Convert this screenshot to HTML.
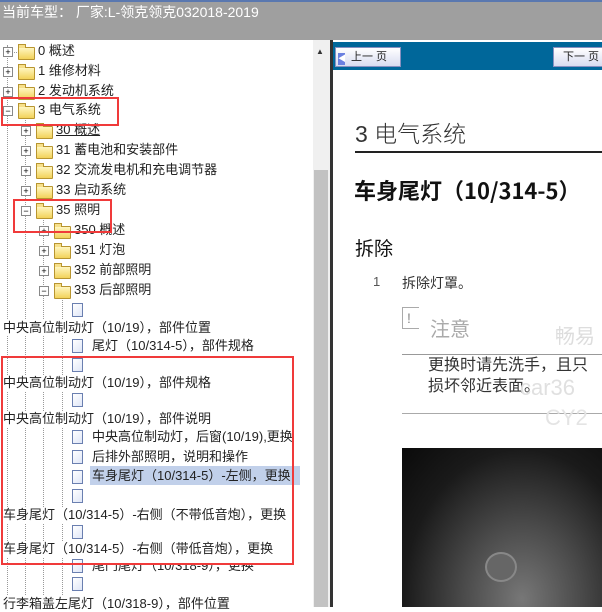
<!DOCTYPE html><html><head><meta charset="utf-8"><style>
body{margin:0;width:602px;height:607px;overflow:hidden;position:relative;font-family:"Liberation Sans","Noto Sans CJK SC",sans-serif;background:#fff}
.a{position:absolute;white-space:nowrap}
.t{font-size:13px;color:#222;line-height:16px}
.fo{position:absolute;width:15px;height:11px;background:linear-gradient(#fff6c0,#f2d25a);border:1px solid #b89530;border-radius:1px}
.fo:before{content:"";position:absolute;left:-1px;top:-4px;width:6px;height:3px;background:#f7e08a;border:1px solid #b89530;border-bottom:none}
.ex{position:absolute;width:8px;height:8px;border:1px solid #888;background:#fff;font-size:9px;line-height:8px;text-align:center;color:#000}
.doc{position:absolute;width:9px;height:12px;border:1px solid #6a7fb0;background:linear-gradient(135deg,#fff,#dfe6f7)}
.vl{position:absolute;width:0;border-left:1px dotted #999}
.hl{position:absolute;height:0;border-top:1px dotted #999}
.rb{position:absolute;border:2px solid #f03a3a}
</style></head><body>
<div class="a" style="left:0;top:0;width:602px;height:40px;background:#9f9f9f"></div>
<div class="a" style="left:0;top:0;width:602px;height:2px;background:#5a78b0"></div>
<div class="a" style="left:2px;top:2px;font-size:14px;color:#fff;">当前车型： 厂家:L-领克领克032018-2019</div>
<div class="vl" style="left:7px;top:45px;height:562px"></div>
<div class="vl" style="left:25px;top:120px;height:487px"></div>
<div class="vl" style="left:43px;top:220px;height:387px"></div>
<div class="vl" style="left:62px;top:300px;height:307px"></div>
<div class="a" style="left:313px;top:40px;width:17px;height:567px;background:#f0f0f0"></div>
<div class="a" style="left:314px;top:170px;width:14px;height:437px;background:#c2c2c2"></div>
<div class="a" style="left:316px;top:47px;font-size:8px;color:#333">▲</div>
<div class="a" style="left:330px;top:40px;width:3px;height:567px;background:#333"></div>
<div class="a" style="left:333px;top:42px;width:269px;height:28px;background:#00679a"></div>
<div class="a" style="left:335px;top:47px;width:64px;height:18px;background:linear-gradient(#fff,#d8dcf0);border:1px solid #8890c0;font-size:11px;line-height:18px;color:#222"><span style="display:inline-block;width:7px;height:12px;background:#6b80e0;color:#fff;font-size:8px;line-height:12px;margin:0 6px 0 2px;vertical-align:-1px">◀</span>上一 页</div>
<div class="a" style="left:553px;top:47px;width:60px;height:18px;background:linear-gradient(#fff,#d8dcf0);border:1px solid #8890c0;font-size:11px;line-height:18px;color:#222;padding-left:9px">下一 页</div>
<div class="a" style="left:355px;top:115px;font-size:23px;color:#333;font-weight:300">3 电气系统</div>
<div class="a" style="left:355px;top:151px;width:247px;height:2px;background:#222"></div>
<div class="a" style="left:354px;top:174px;font-size:22px;font-weight:bold;color:#111;font-family:'Noto Sans CJK SC',sans-serif">车身尾灯（10/314-5）</div>
<div class="a" style="left:355px;top:234px;font-size:19px;color:#111">拆除</div>
<div class="a" style="left:373px;top:274px;font-size:13px;color:#555">1</div>
<div class="a" style="left:402px;top:273px;font-size:14px;color:#333">拆除灯罩。</div>
<div class="a" style="left:402px;top:307px;width:12px;height:20px;border:1px solid #aaa;border-right:none;font-size:14px;color:#888;line-height:20px;padding-left:4px">!</div>
<div class="a" style="left:430px;top:313px;font-size:20px;color:#aaa">注意</div>
<div class="a" style="left:402px;top:354px;width:200px;height:1px;background:#999"></div>
<div class="a" style="left:428px;top:355px;font-size:16px;line-height:21px;color:#333">更换时请先洗手，且只<br>损坏邻近表面。</div>
<div class="a" style="left:402px;top:413px;width:200px;height:1px;background:#aaa"></div>
<div class="a" style="left:555px;top:320px;font-size:20px;color:#ddd">畅易</div>
<div class="a" style="left:520px;top:375px;font-size:22px;color:#e0e0e0">car36</div>
<div class="a" style="left:545px;top:405px;font-size:22px;color:#e4e4e4">CY2</div>
<div class="a" style="left:402px;top:448px;width:200px;height:159px;background:radial-gradient(ellipse at 60% 95%,#777 0%,#4a4a4a 35%,#1a1a1a 70%,#0a0a0a 100%)"></div>
<div class="a" style="left:485px;top:552px;width:28px;height:26px;border-radius:50%;background:#666;border:2px solid #888"></div>

<div class="hl" style="left:8px;top:52px;width:9px"></div><div class="ex" style="left:3px;top:47px">+</div><div class="fo" style="left:18px;top:47px"></div><div class="a t" style="left:38px;top:43px">0 概述</div>
<div class="ex" style="left:3px;top:67px">+</div><div class="fo" style="left:18px;top:67px"></div><div class="a t" style="left:38px;top:63px">1 维修材料</div>
<div class="ex" style="left:3px;top:87px">+</div><div class="fo" style="left:18px;top:87px"></div><div class="a t" style="left:38px;top:83px">2 发动机系统</div>
<div class="ex" style="left:3px;top:106px">−</div><div class="fo" style="left:18px;top:106px"></div><div class="a t" style="left:38px;top:102px">3 电气系统</div>
<div class="ex" style="left:21px;top:126px">+</div><div class="fo" style="left:36px;top:126px"></div><div class="a t" style="left:56px;top:122px;text-decoration:underline">30 概述</div>
<div class="ex" style="left:21px;top:146px">+</div><div class="fo" style="left:36px;top:146px"></div><div class="a t" style="left:56px;top:142px">31 蓄电池和安装部件</div>
<div class="ex" style="left:21px;top:166px">+</div><div class="fo" style="left:36px;top:166px"></div><div class="a t" style="left:56px;top:162px">32 交流发电机和充电调节器</div>
<div class="ex" style="left:21px;top:186px">+</div><div class="fo" style="left:36px;top:186px"></div><div class="a t" style="left:56px;top:182px">33 启动系统</div>
<div class="ex" style="left:21px;top:206px">−</div><div class="fo" style="left:36px;top:206px"></div><div class="a t" style="left:56px;top:202px">35 照明</div>
<div class="ex" style="left:39px;top:226px">+</div><div class="fo" style="left:54px;top:226px"></div><div class="a t" style="left:74px;top:222px">350 概述</div>
<div class="ex" style="left:39px;top:246px">+</div><div class="fo" style="left:54px;top:246px"></div><div class="a t" style="left:74px;top:242px">351 灯泡</div>
<div class="ex" style="left:39px;top:266px">+</div><div class="fo" style="left:54px;top:266px"></div><div class="a t" style="left:74px;top:262px">352 前部照明</div>
<div class="ex" style="left:39px;top:286px">−</div><div class="fo" style="left:54px;top:286px"></div><div class="a t" style="left:74px;top:282px">353 后部照明</div>
<div class="doc" style="left:72px;top:303px"></div>
<div class="a t" style="left:3px;top:320px;background:#fff">中央高位制动灯（10/19），部件位置</div>
<div class="doc" style="left:72px;top:339px"></div><div class="a t" style="left:92px;top:338px">尾灯（10/314-5），部件规格</div>
<div class="doc" style="left:72px;top:358px"></div>
<div class="a t" style="left:3px;top:375px;background:#fff">中央高位制动灯（10/19），部件规格</div>
<div class="doc" style="left:72px;top:393px"></div>
<div class="a t" style="left:3px;top:411px;background:#fff">中央高位制动灯（10/19），部件说明</div>
<div class="doc" style="left:72px;top:430px"></div><div class="a t" style="left:92px;top:429px">中央高位制动灯，后窗(10/19),更换</div>
<div class="doc" style="left:72px;top:450px"></div><div class="a t" style="left:92px;top:449px">后排外部照明，说明和操作</div>
<div class="doc" style="left:72px;top:470px"></div><div class="a t" style="left:90px;top:466px;height:19px;line-height:19px;background:#c1d0ea;padding:0 2px;width:206px">车身尾灯（10/314-5）-左侧，更换</div>
<div class="doc" style="left:72px;top:489px"></div>
<div class="a t" style="left:3px;top:507px;background:#fff">车身尾灯（10/314-5）-右侧（不带低音炮），更换</div>
<div class="doc" style="left:72px;top:525px"></div>
<div class="a t" style="left:3px;top:541px;background:#fff">车身尾灯（10/314-5）-右侧（带低音炮），更换</div>
<div class="doc" style="left:72px;top:559px"></div><div class="a t" style="left:92px;top:558px;clip-path:inset(5px 0 0 0)">尾门尾灯（10/318-9），更换</div>
<div class="doc" style="left:72px;top:577px"></div>
<div class="a t" style="left:3px;top:596px;background:#fff">行李箱盖左尾灯（10/318-9），部件位置</div>
<div class="rb" style="left:1px;top:97px;width:114px;height:25px"></div>
<div class="rb" style="left:13px;top:199px;width:95px;height:30px"></div>
<div class="rb" style="left:1px;top:356px;width:289px;height:205px"></div>
</body></html>
